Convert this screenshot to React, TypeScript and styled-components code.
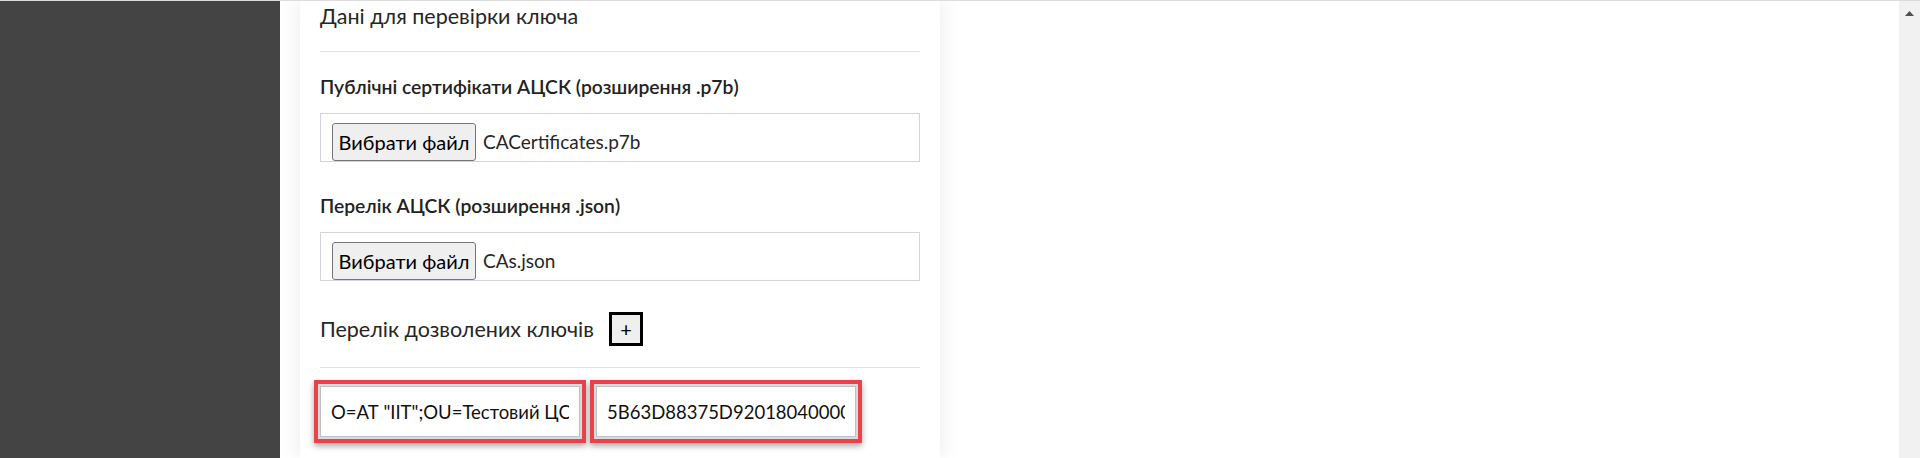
import React from "react";
import styled, { createGlobalStyle } from "styled-components";

const font = `"Lato", "Open Sans", sans-serif`;

const GlobalStyle = createGlobalStyle`
  html, body {
    margin: 0;
    padding: 0;
    background: #fff;
  }
  * {
    box-sizing: border-box;
  }
`;

const Frame = styled.div`
  display: flex;
  height: 458px;
  border-top: 1px solid #dcdcdc;
  overflow: hidden;
  font-family: ${font};
  color: #262626;
`;

const Sidebar = styled.div`
  flex: 0 0 280px;
  background: #444444;
`;

const Main = styled.div`
  flex: 1;
  padding-left: 20px;
  background: #fff;
`;

const Panel = styled.section`
  width: 640px;
  height: 100%;
  padding: 0 20px;
  background: #fff;
  box-shadow: 0 0 20px rgba(0, 0, 0, 0.09);
`;

const Title = styled.h3`
  margin: 0;
  font-size: 21.5px;
  font-weight: 400;
  line-height: 30px;
`;

const Divider = styled.hr<{ $top: number }>`
  margin: ${(p) => p.$top}px 0 0;
  border: 0;
  border-top: 1px solid #e2e2e2;
`;

const Field = styled.div<{ $top: number }>`
  margin-top: ${(p) => p.$top}px;
`;

const Label = styled.div`
  font-size: 19.3px;
  font-weight: 600;
  line-height: 24px;
  margin-bottom: 14px;
  color: #222;
`;

const FileBox = styled.div`
  display: flex;
  align-items: flex-end;
  height: 49px;
  padding: 9px 11px 0;
  border: 1px solid #d3d3de;
`;

const FileButton = styled.button`
  height: 38px;
  width: 144px;
  padding: 0;
  border: 1px solid #767676;
  border-radius: 3px;
  background: #efefef;
  color: #000;
  font-family: ${font};
  font-size: 20px;
`;

const FileName = styled.span`
  margin-left: 7px;
  font-size: 19px;
  line-height: 38px;
`;

const KeysHeader = styled.div`
  display: flex;
  align-items: center;
  gap: 15px;
  margin-top: 31px;
  height: 34px;
`;

const KeysTitle = styled.span`
  font-size: 21.5px;
  line-height: 30px;
`;

const AddButton = styled.button`
  width: 34px;
  height: 34px;
  padding: 0;
  border: 3px solid #000;
  background: #efefef;
  color: #000;
  font-family: ${font};
  font-size: 20px;
  line-height: 26px;
`;

const KeysRow = styled.div`
  display: flex;
  gap: 4px;
  margin: 12px 0 0 -6px;
`;

const KeyCell = styled.div`
  width: 272px;
  padding: 2px;
  border: 4px solid #e8434b;
  background: #dadada;
  box-shadow: 0 3px 6px rgba(0, 0, 0, 0.35);
`;

const KeyInput = styled.input`
  display: block;
  width: 100%;
  height: 51px;
  padding: 0 10px;
  border: 1px solid #bfc0c8;
  background: #fff;
  color: #111;
  font-family: ${font};
  font-size: 18.5px;
  outline: none;
`;

const ScrollTrack = styled.div`
  flex: 0 0 21px;
  background: #f1f1f1;
  display: flex;
  justify-content: center;
  padding-top: 10px;
`;

const files = [
  { label: "Публічні сертифікати АЦСК (розширення .p7b)", name: "CACertificates.p7b", top: 23 },
  { label: "Перелік АЦСК (розширення .json)", name: "CAs.json", top: 32 },
];

const keys = [
  'O=АТ "ІІТ";OU=Тестовий ЦСК;CN=Тестовий ЦСК АТ "ІІТ";Serial=UA-22723472-2018;C=UA;L=Харків',
  "5B63D88375D92018040000000A000000",
];

const App = () => (
  <>
    <GlobalStyle />
    <Frame>
      <Sidebar />
      <Main>
        <Panel>
          <Title>Дані для перевірки ключа</Title>
          <Divider $top={20} />
          {files.map((f) => (
            <Field key={f.label} $top={f.top}>
              <Label>{f.label}</Label>
              <FileBox>
                <FileButton type="button">Вибрати файл</FileButton>
                <FileName>{f.name}</FileName>
              </FileBox>
            </Field>
          ))}
          <KeysHeader>
            <KeysTitle>Перелік дозволених ключів</KeysTitle>
            <AddButton type="button">+</AddButton>
          </KeysHeader>
          <Divider $top={21} />
          <KeysRow>
            {keys.map((k) => (
              <KeyCell key={k}>
                <KeyInput readOnly value={k} />
              </KeyCell>
            ))}
          </KeysRow>
        </Panel>
      </Main>
      <ScrollTrack>
        <svg width="9" height="5" viewBox="0 0 9 5">
          <polygon points="4.5,0 9,5 0,5" fill="#505050" />
        </svg>
      </ScrollTrack>
    </Frame>
  </>
);

export default App;
